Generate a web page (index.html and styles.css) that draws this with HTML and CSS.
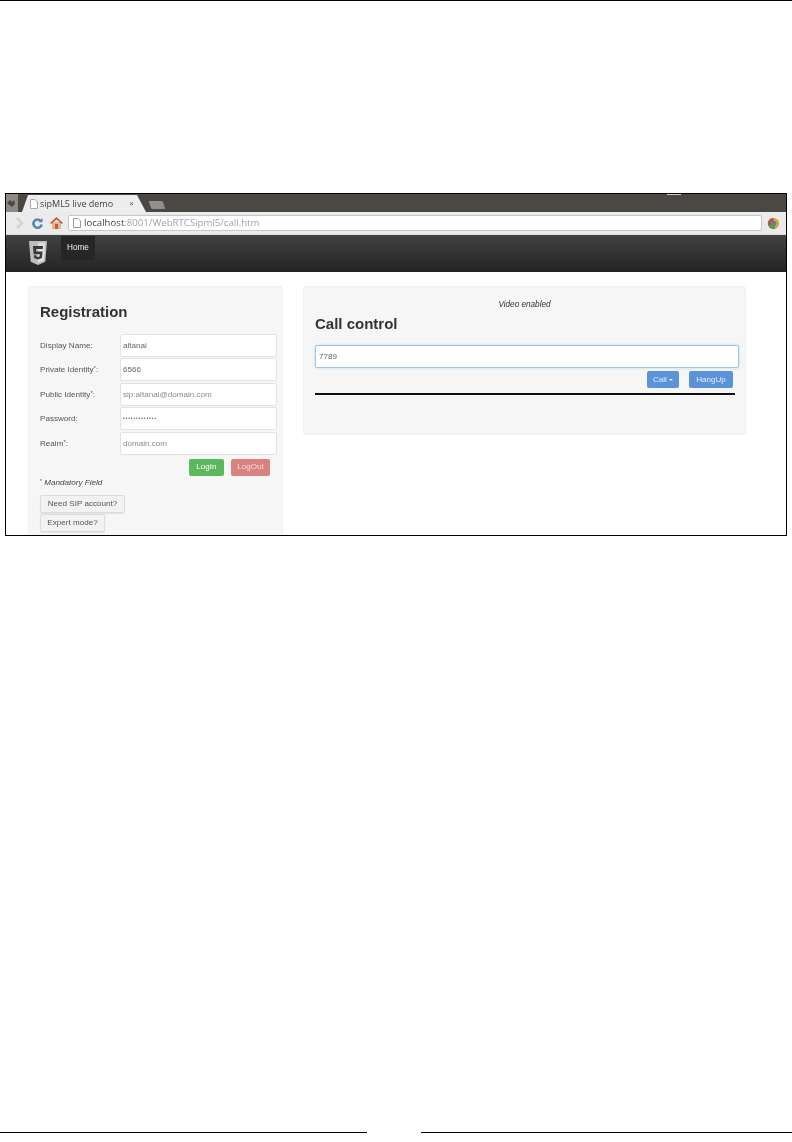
FILE: index.html
```html
<!DOCTYPE html>
<html lang="en">
<head>
<meta charset="utf-8">
<title>sipML5 live demo</title>
<link rel="stylesheet" href="styles.css">
</head>
<body>
<div class="page">
  <div class="top-rule"></div>
  <figure class="shot">
    <div class="tabbar">
      <svg class="corner" width="12" height="18" viewBox="0 0 12 18"><rect width="12" height="18" fill="#8d8a85"/><path d="M1 9l3-3 2 2 2-2 1 4-3 3z" fill="#4b4845"/></svg>
      <div class="tab">
        <svg class="doc" width="8" height="10" viewBox="0 0 8 10"><path d="M.5.5h4.500l2.500 2.500v6.500h-7z" fill="#fff" stroke="#aaa"/></svg>
        <span class="tab-title">sipML5 live demo</span>
        <span class="tab-x">×</span>
      </div>
      <div class="newtab"></div>
      <div class="tab-mark"></div>
    </div>
    <div class="toolbar">
      <svg class="nav-ico fwd" width="10" height="14" viewBox="0 0 10 14"><path d="M2 2l5 5-5 5" fill="none" stroke="#d3d3d3" stroke-width="2.500"/></svg>
      <svg class="nav-ico reload" width="11" height="11" viewBox="0 0 12 12"><path d="M9.500 3.200A4.500 4.500 0 1 0 10.500 7" fill="none" stroke="#4f86b8" stroke-width="2.800"/><path d="M7 4.500h4.500V0z" fill="#4f86b8"/></svg>
      <svg class="nav-ico home" width="13" height="12" viewBox="0 0 13 12"><rect x="2" y="5" width="9" height="7" fill="#dcb994"/><path d="M6.500 0L0 6l1.200 1L6.500 2.500 11.800 7 13 6z" fill="#c9573f"/><rect x="5" y="7" width="3" height="5" fill="#c9573f"/></svg>
      <div class="omnibox">
        <svg class="doc" width="8" height="10" viewBox="0 0 8 10"><path d="M.5.5h4.500l2.500 2.500v6.500h-7z" fill="#fff" stroke="#999"/></svg>
        <span class="host">localhost</span><span class="path">:8001/WebRTCSipml5/call.htm</span>
      </div>
      <svg class="ext" width="13" height="13" viewBox="0 0 14 14"><circle cx="7" cy="7" r="6" fill="#d9a928"/><path d="M7 7V1a6 6 0 0 0-5.500 8.500z" fill="#b7533f"/><path d="M7 7l-5.500 2.500A6 6 0 0 0 9 12.700z" fill="#5d9a4e"/><circle cx="7" cy="7" r="3" fill="#5f7fa8"/></svg>
    </div>
    <nav class="navbar">
      <svg class="html5" width="20" height="26" viewBox="0 0 20 24" preserveAspectRatio="none"><path d="M1 1h18l-1.700 19L10 23l-7.300-3z" fill="#bdbdbd"/><path d="M10 2.500h7.300l-1.400 16.300L10 21z" fill="#e0e0e0"/><path d="M5 5.500h10l-.3 2.700H8l.2 2.500h6.300l-.6 6L10 18l-3.900-1.300-.3-2.700h2.500l.1 1.200 1.600.5 1.600-.5.200-2.100H5.600z" fill="#3a3a3a"/></svg>
      <a class="nav-home">Home</a>
    </nav>
    <div class="content">
      <section class="well reg">
        <h2 class="reg-title">Registration</h2>
        <div class="field"><label class="lbl">Display Name:</label><div class="input">altanai</div></div>
        <div class="field"><label class="lbl">Private Identity<sup>*</sup>:</label><div class="input">6566</div></div>
        <div class="field"><label class="lbl">Public Identity<sup>*</sup>:</label><div class="input muted">sip:altanai@domain.com</div></div>
        <div class="field"><label class="lbl">Password:</label><div class="input pw">•••••••••••••</div></div>
        <div class="field"><label class="lbl">Realm<sup>*</sup>:</label><div class="input muted">domain.com</div></div>
        <div class="reg-actions">
          <button class="btn green">LogIn</button>
          <button class="btn red">LogOut</button>
        </div>
        <p class="note"><sup>*</sup> <em>Mandatory Field</em></p>
        <button class="btn plain first">Need SIP account?</button>
        <button class="btn plain">Expert mode?</button>
      </section>
      <section class="well call">
        <p class="video">Video enabled</p>
        <h2 class="call-title">Call control</h2>
        <div class="input focus">7789</div>
        <div class="call-actions">
          <button class="btn blue">Call <span class="caret"></span></button>
          <button class="btn blue">HangUp</button>
        </div>
        <div class="call-rule"></div>
      </section>
    </div>
  </figure>
  <div class="foot">
    <div class="foot-left"></div>
    <div class="foot-right"></div>
  </div>
</div>
</body>
</html>
```

FILE: styles.css
```css
* { box-sizing: border-box; }
html, body { margin: 0; padding: 0; background: #fff; }
body { font-family: "Liberation Sans", Arial, sans-serif; }
.page { width: 792px; height: 1142px; display: flex; flex-direction: column; overflow: hidden; }
.top-rule { height: 1px; background: #000; flex: none; }
.shot { margin: 192px 5px 0 5px; width: 782px; height: 343px; border: 1px solid #000; overflow: hidden; flex: none; display: flex; flex-direction: column; background: #fff; }
.tabbar, .toolbar, .navbar, .content { filter: blur(.35px); }

.tabbar { height: 18px; background: #4b4844; display: flex; align-items: flex-end; flex: none; position: relative; }
.corner { flex: none; margin-right: 4px; }
.tab { width: 124px; height: 17px; background: #ededed; clip-path: polygon(0 100%, 6px 0, 115px 0, 100% 100%); display: flex; align-items: center; padding: 0 12px 0 8px; gap: 2px; flex: none; }
.tab-title { font: 9px/14px "Open Sans", "Liberation Sans", sans-serif; color: #444; flex: 1; white-space: nowrap; }
.tab-x { font-size: 8px; color: #555; }
.newtab { width: 14px; height: 8px; margin: 0 0 3px 4px; background: #8f8f8b; transform: skewX(20deg); border-radius: 1px; flex: none; }
.tab-mark { position: absolute; top: 0; right: 105px; width: 14px; height: 1px; background: #cfcfcf; }

.toolbar { height: 23px; background: #ebebeb; display: flex; align-items: center; padding: 0 4px 0 9px; flex: none; border-bottom: 1px solid #ddd; }
.nav-ico { flex: none; }
.fwd { margin-right: 7px; }
.reload { margin-right: 7px; }
.home { margin-right: 5px; }
.omnibox { width: 694px; height: 16px; background: #fff; border: 1px solid #c8c8c8; border-radius: 2px; display: flex; align-items: center; padding-left: 4px; font: 9.650px/14px "Open Sans", "Liberation Sans", sans-serif; white-space: nowrap; flex: none; }
.omnibox .doc { margin-right: 3px; }
.host { color: #444; }
.path { color: #a3a3a3; }
.ext { flex: none; margin-left: 5px; }

.navbar { height: 37px; background: linear-gradient(#424242, #232323); display: flex; align-items: flex-start; padding-left: 22px; flex: none; }
.html5 { margin-top: 5px; flex: none; }
.nav-home { margin-left: 13px; width: 34px; height: 24px; background: #262626; color: #eee; font-size: 8.200px; line-height: 23px; text-align: center; margin-top: 1px; }

.content { display: flex; align-items: flex-start; padding: 14px 0 0 22px; gap: 20px; }
.well { background: #f6f6f6; border: 1px solid #efefef; border-radius: 3px; color: #333; flex: none; }
.reg { width: 255px; height: 300px; padding: 16px 5px 0 11px; }
.reg-title { margin: 0 0 12px; font-size: 15px; line-height: 18px; font-weight: 700; color: #333; }
.field { display: flex; align-items: center; height: 24.500px; }
.lbl { width: 80px; font-size: 8.100px; color: #555; flex: none; }
.lbl sup { font-size: 6px; line-height: 0; vertical-align: 2px; }
.input { background: #fff; border: 1px solid #e2e2e2; border-radius: 2px; font-size: 8.100px; color: #666; height: 23px; line-height: 21px; padding-left: 2px; }
.field .input { width: 157px; flex: none; }
.muted { color: #8a8a8a; }
.pw { font-size: 5px; letter-spacing: .85px; }
.reg-actions { display: flex; justify-content: flex-end; gap: 7px; padding: 3px 7px 0 0; }
.btn { font-family: "Liberation Sans", Arial, sans-serif; font-size: 8.100px; border: 0; border-radius: 2px; padding: 0; height: 17px; line-height: 16px; display: block; color: #fff; }
.green { width: 35px; background: #5cb85c; }
.red { width: 39px; background: #d9827f; color: #f3dcdb; }
.note { margin: 2px 0 7px; font-size: 8.100px; line-height: 10px; color: #444; }
.note sup { font-size: 5px; line-height: 0; vertical-align: 2px; }
.plain { background: #f2f2f2; border: 1px solid #dcdcdc; color: #555; height: 18px; line-height: 15px; box-shadow: 0 1px 1px #e2e2e2; }
.plain.first { width: 85px; margin-bottom: 1px; }
.plain:not(.first) { width: 65px; }

.call { width: 443px; height: 149px; padding: 12px 8px 0 11px; }
.video { margin: 0; font-size: 8.200px; line-height: 11px; font-style: italic; text-align: center; color: #333; padding-right: 3px; }
.call-title { margin: 5px 0 12px; font-size: 15px; line-height: 18px; font-weight: 700; color: #333; }
.focus { width: 424px; border: 1px solid #9cc8ea; box-shadow: 0 0 3px #b5d8f2; padding-left: 3px; }
.call-actions { display: flex; justify-content: flex-end; gap: 10px; padding: 3px 4px 0 0; align-items: center; }
.blue { background: #5b93d9; color: #e4eefa; height: 17px; }
.blue:first-child { width: 32px; }
.blue:last-child { width: 44px; }
.caret { display: inline-block; width: 0; height: 0; border: 2.500px solid transparent; border-top-color: #e4eefa; border-bottom: 0; vertical-align: 1px; }
.call-rule { width: 420px; height: 1.500px; background: #111; margin-top: 5px; }

.foot { margin-top: 596px; display: flex; justify-content: space-between; flex: none; }
.foot-left { width: 367px; height: 1px; background: #000; }
.foot-right { width: 371px; height: 1px; background: #000; }
```
